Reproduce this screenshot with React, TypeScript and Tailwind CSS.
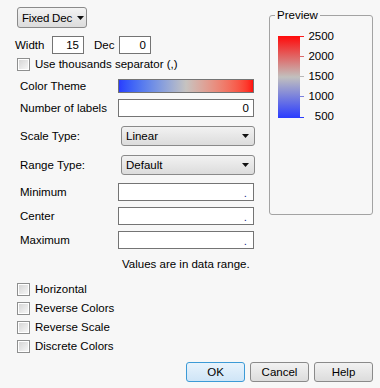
import React from 'react'

const Caret = () => (
  <svg width="7" height="4" viewBox="0 0 7 4" className="shrink-0">
    <polygon points="0,0 7,0 3.5,4" fill="#111" />
  </svg>
)

const Field = ({ value, className }: { value?: string; className?: string }) => (
  <div
    className={`flex h-[18px] items-center justify-end border border-[#747474] bg-white pr-[4px] ${className ?? ''}`}
  >
    {value}
  </div>
)

const EmptyNumber = () => (
  <div className="flex h-[18px] w-[136px] items-end justify-end border border-[#747474] bg-white pr-[6px] pb-[1px] leading-[12px] text-[#1c2a8c]">
    .
  </div>
)

const Select = ({ value }: { value: string }) => (
  <div className="flex h-[20px] w-[134px] items-center justify-between rounded-[3px] border border-[#8a8a8a] bg-gradient-to-b from-[#f2f2f2] to-[#dcdcdc] pl-[4px] pr-[5px]">
    <span>{value}</span>
    <Caret />
  </div>
)

const Check = ({ label, className }: { label: string; className?: string }) => (
  <label className={`flex h-[16px] items-center gap-[5px] whitespace-nowrap ${className ?? ''}`}>
    <span className="flex h-[13px] w-[13px] items-center justify-center border border-[#8e8f8f] bg-white">
      <span className="h-[9px] w-[9px] bg-gradient-to-br from-[#d6d6d6] to-[#f6f6f6]" />
    </span>
    <span>{label}</span>
  </label>
)

const Row = ({ label, labelW, children, className }: { label: string; labelW: string; children: React.ReactNode; className?: string }) => (
  <div className={`ml-[20px] flex items-center whitespace-nowrap ${className ?? ''}`}>
    <span className={labelW}>{label}</span>
    {children}
  </div>
)

const ticks = [
  { y: 0.5, c: '#ff1a1a' },
  { y: 20.5, c: '#dc6a6a' },
  { y: 40.5, c: '#b8b8b8' },
  { y: 60.5, c: '#7a80de' },
  { y: 81.5, c: '#2a3cff' },
]

const Button = ({ label, primary }: { label: string; primary?: boolean }) => (
  <button
    className={`h-[20px] w-[59px] rounded-[3px] border text-center ${
      primary
        ? 'border-[#3c9ad6] bg-gradient-to-b from-[#e8f3fc] to-[#cfe5f7]'
        : 'border-[#8a8a8a] bg-gradient-to-b from-[#f2f2f2] to-[#dcdcdc]'
    }`}
  >
    {label}
  </button>
)

export default function App() {
  return (
    <div className="h-[388px] w-[380px] bg-[#f7f7f7] font-['Liberation_Sans',Arial,sans-serif] text-[11.5px] leading-[16px] text-black">
      <div className="flex">
        <div className="w-[269px]">
          <div className="pl-[17px] pt-[7px]">
            <button className="flex h-[21px] w-[70px] items-center whitespace-nowrap rounded-[3px] border border-[#8a8a8a] bg-gradient-to-b from-[#f3f3f3] to-[#dcdcdc] pl-[4px] pr-[2px]">
              <span className="tracking-[-0.2px]">Fixed Dec</span>
              <span className="ml-auto">
                <Caret />
              </span>
            </button>
          </div>

          <div className="ml-[15px] mt-[8px] flex h-[18px] items-center">
            <span className="w-[37px]">Width</span>
            <Field value="15" className="w-[32px]" />
            <span className="ml-[10px] w-[25px]">Dec</span>
            <Field value="0" className="w-[32px]" />
          </div>

          <Check label="Use thousands separator (,)" className="ml-[17px] mt-[2px]" />

          <Row label="Color Theme" labelW="w-[98px]" className="mt-[7px] h-[14px]">
            <div className="h-[14px] w-[136px] border border-[#747474] bg-gradient-to-r from-[#2a3cff] via-[#c6c3c0] to-[#ff0d0d]" />
          </Row>

          <Row label="Number of labels" labelW="w-[98px]" className="mt-[6px] h-[18px]">
            <Field value="0" className="w-[136px]" />
          </Row>

          <Row label="Scale Type:" labelW="w-[101px]" className="mt-[9px] h-[20px]">
            <Select value="Linear" />
          </Row>

          <Row label="Range Type:" labelW="w-[101px]" className="mt-[9px] h-[20px]">
            <Select value="Default" />
          </Row>

          <Row label="Minimum" labelW="w-[98px]" className="mt-[8px] h-[18px]">
            <EmptyNumber />
          </Row>
          <Row label="Center" labelW="w-[98px]" className="mt-[6px] h-[18px]">
            <EmptyNumber />
          </Row>
          <Row label="Maximum" labelW="w-[98px]" className="mt-[6px] h-[18px]">
            <EmptyNumber />
          </Row>

          <div className="ml-[122px] mt-[7px] whitespace-nowrap">Values are in data range.</div>

          <Check label="Horizontal" className="ml-[17px] mt-[9px]" />
          <Check label="Reverse Colors" className="ml-[17px] mt-[3px]" />
          <Check label="Reverse Scale" className="ml-[17px] mt-[3px]" />
          <Check label="Discrete Colors" className="ml-[17px] mt-[3px]" />
        </div>

        <fieldset className="mt-[7px] h-[208px] w-[104px] rounded-[3px] border border-[#a3a3a3]">
          <legend className="ml-[5px] px-[2px]">Preview</legend>
          <div className="mt-[3px] flex">
            <svg width="27" height="83" viewBox="0 0 27 83" className="ml-[8px] mt-[10px]">
              <defs>
                <linearGradient id="pv" x1="0" y1="0" x2="0" y2="1">
                  <stop offset="0" stopColor="#ff0a0a" />
                  <stop offset="0.5" stopColor="#c2c0be" />
                  <stop offset="1" stopColor="#2a3cff" />
                </linearGradient>
              </defs>
              <rect x="0" y="0" width="22" height="82" fill="url(#pv)" />
              {ticks.map((t) => (
                <line key={t.y} x1="22" x2="26" y1={t.y} y2={t.y} stroke={t.c} strokeWidth="1" />
              ))}
            </svg>
            <div className="w-[29px] text-right">
              {['2500', '2000', '1500', '1000', '500'].map((v) => (
                <div key={v} className="h-[20px] leading-[20px]">
                  {v}
                </div>
              ))}
            </div>
          </div>
        </fieldset>
      </div>

      <div className="mt-[8px] flex justify-end gap-[5px] pr-[7px]">
        <Button label="OK" primary />
        <Button label="Cancel" />
        <Button label="Help" />
      </div>
    </div>
  )
}
